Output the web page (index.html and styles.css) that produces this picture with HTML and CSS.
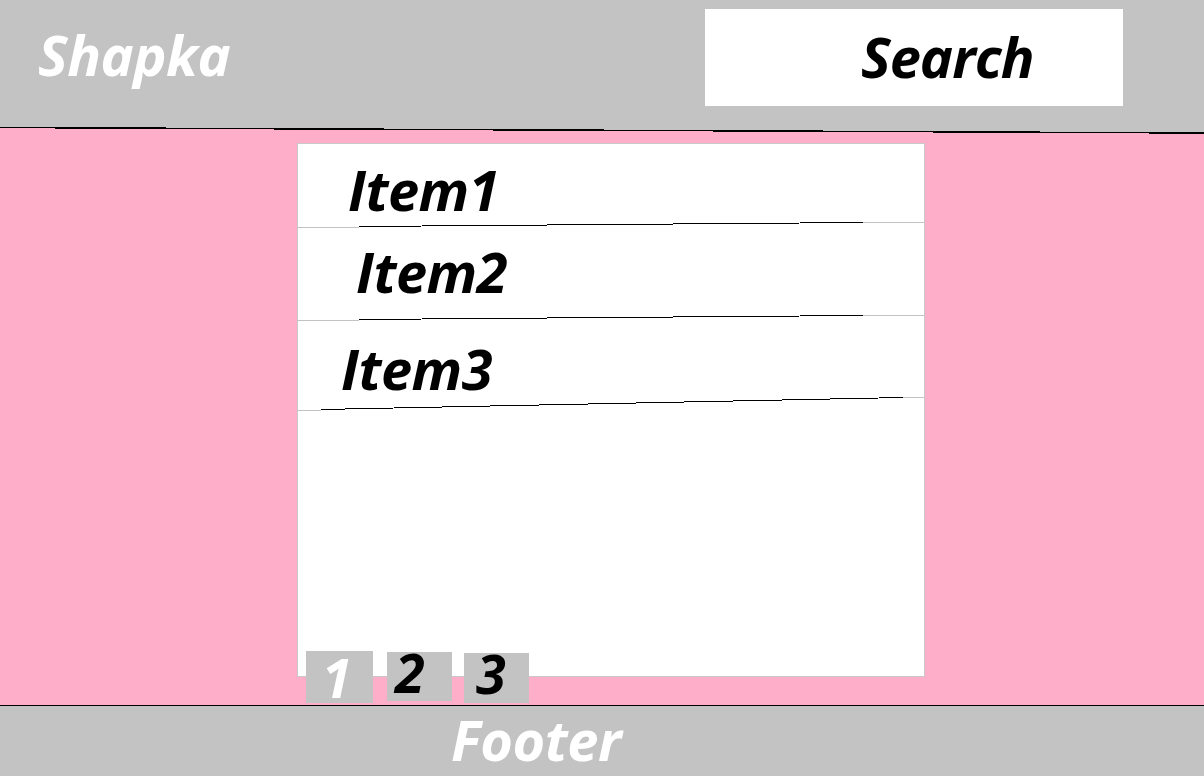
FILE: index.html
```html
<!DOCTYPE html>
<html lang="en">
<head>
<meta charset="utf-8">
<title>Shapka</title>
<link rel="stylesheet" href="styles.css">
</head>
<body>
<div class="page">
  <header class="header">
    <div class="logo">Shapka</div>
    <div class="search">Search</div>
  </header>
  <svg class="header-rule" width="1204" height="7" viewBox="0 0 1204 7" shape-rendering="crispEdges">
    <polygon points="0,0 1204,0 1204,6 0,0.5" fill="#c3c3c3"/>
    <polyline points="0,0.5 1204,6" fill="none" stroke="#000" stroke-width="1.5"/>
  </svg>
  <main class="main">
    <section class="panel">
      <div class="row row-1"><span class="item item-1">Item1</span></div>
      <svg class="sep" width="626" height="7" viewBox="0 0 626 7" shape-rendering="crispEdges">
        <line x1="0" y1="6.5" x2="61" y2="6.5" stroke="#c3c3c3"/>
        <line x1="61" y1="5.5" x2="565" y2="1.5" stroke="#000"/>
        <line x1="565" y1="1.5" x2="626" y2="1.5" stroke="#c3c3c3"/>
      </svg>
      <div class="row row-2"><span class="item item-2">Item2</span></div>
      <svg class="sep" width="626" height="7" viewBox="0 0 626 7" shape-rendering="crispEdges">
        <line x1="0" y1="6.5" x2="61" y2="6.5" stroke="#c3c3c3"/>
        <line x1="61" y1="5.5" x2="565" y2="1.5" stroke="#000"/>
        <line x1="565" y1="1.5" x2="626" y2="1.5" stroke="#c3c3c3"/>
      </svg>
      <div class="row row-3"><span class="item item-3">Item3</span></div>
      <svg class="sep" width="626" height="15" viewBox="0 0 626 15" shape-rendering="crispEdges">
        <line x1="0" y1="14.5" x2="23" y2="14.5" stroke="#c3c3c3"/>
        <line x1="23" y1="13.5" x2="605" y2="1.5" stroke="#000"/>
        <line x1="605" y1="1.5" x2="626" y2="1.5" stroke="#c3c3c3"/>
      </svg>
    </section>
    <nav class="pager">
      <span class="page-btn page-1">1</span>
      <span class="page-btn page-2">2</span>
      <span class="page-btn page-3">3</span>
    </nav>
  </main>
  <footer class="footer">
    <div class="footer-text">Footer</div>
  </footer>
</div>
</body>
</html>
```
FILE: styles.css
```css
* {
  box-sizing: border-box;
}

html, body {
  margin: 0;
  padding: 0;
  width: 1204px;
  height: 776px;
  overflow: hidden;
  background: #ffaec9;
}

.page {
  display: flex;
  flex-direction: column;
  width: 1204px;
  height: 776px;
  font-family: "Open Sans", "Noto Sans", sans-serif;
  font-weight: 700;
  font-style: italic;
  font-size: 56px;
  line-height: 56px;
}

.header {
  display: flex;
  justify-content: space-between;
  align-items: flex-start;
  height: 127px;
  flex: none;
  background: #c3c3c3;
}

.logo {
  color: #fff;
  margin: 26px 0 0 38px;
  letter-spacing: -0.5px;
}

.search {
  width: 418px;
  height: 97px;
  margin: 9px 81px 0 0;
  padding: 19px 0 0 156px;
  background: #fff;
  color: #000;
  letter-spacing: -1px;
}

.header-rule {
  display: block;
  flex: none;
}

.main {
  flex: 1;
  display: flex;
  flex-direction: column;
  padding: 9px 0 0 297px;
}

.panel {
  width: 628px;
  height: 534px;
  background: #fff;
  border: 1px solid #c8c8c8;
  display: flex;
  flex-direction: column;
}

.sep {
  display: block;
  flex: none;
}

.row {
  flex: none;
  color: #000;
}

.row-1 {
  height: 77px;
  padding: 17px 0 0 50px;
}

.row-2 {
  height: 86px;
  padding: 15px 0 0 58px;
}

.row-3 {
  height: 75px;
  padding: 19px 0 0 43px;
}

.item {
  display: inline-block;
  letter-spacing: -0.5px;
}

.pager {
  display: flex;
  align-items: flex-start;
  margin: -26px 0 0 9px;
  gap: 14px;
}

.page-btn {
  display: block;
  background: #c3c3c3;
  font-size: 54px;
  line-height: 40px;
  color: #000;
}

.page-1 {
  width: 67px;
  height: 52px;
  padding: 6px 0 0 16px;
  color: #fff;
}

.page-2 {
  width: 65px;
  height: 49px;
  margin-top: 1px;
  padding: 0 0 0 8px;
}

.page-3 {
  width: 65px;
  height: 50px;
  margin-top: 2px;
  margin-left: -2px;
  padding: 0 0 0 12px;
}

.footer {
  height: 71px;
  flex: none;
  background: #c3c3c3;
  border-top: 1px solid #000;
  padding: 5px 0 0 451px;
}

.footer-text {
  color: #fff;
  letter-spacing: -0.5px;
}
```
